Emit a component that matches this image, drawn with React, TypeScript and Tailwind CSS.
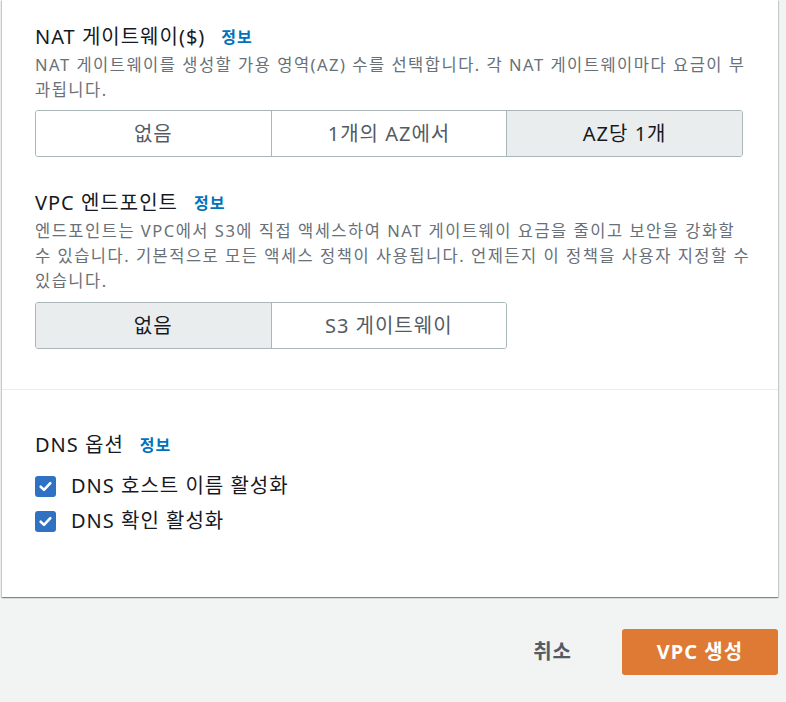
import React, { useState } from 'react';

const FONT = '"Noto Sans", "Noto Sans CJK KR", sans-serif';

function InfoLink() {
    return <a className="ml-[16px] text-[16px] font-bold tracking-[1px] text-[#0073bb] leading-[24px]">정보</a>;
}

interface SegmentedProps {
    options: string[];
    value: number;
    onChange: (i: number) => void;
    width: string;
}

function Segmented({ options, value, onChange, width }: SegmentedProps) {
    return (
        <div className={`flex h-[47px] rounded-[3px] border border-[#aab7b8] overflow-hidden ${width}`}>
            {options.map((opt, i) => (
                <button
                    key={opt}
                    onClick={() => onChange(i)}
                    className={`flex-1 flex items-center justify-center text-[20px] tracking-[1px] ${i > 0 ? 'border-l border-[#aab7b8]' : ''} ${value === i ? 'bg-[#eaeded] text-[#16191f]' : 'bg-white text-[#545b64]'}`}
                >
                    {opt}
                </button>
            ))}
        </div>
    );
}

function Checkbox({ checked, label, onToggle }: { checked: boolean; label: string; onToggle: () => void }) {
    return (
        <label className="flex items-center h-[24px] cursor-pointer" onClick={onToggle}>
            <span className={`w-[21px] h-[21px] rounded-[3px] flex items-center justify-center ${checked ? 'bg-[#2f71c2]' : 'border-2 border-[#aab7b8] bg-white'}`}>
                {checked && (
                    <svg width="15" height="15" viewBox="0 0 14 14" fill="none">
                        <path d="M2.5 7.2 L5.6 10.2 L11.5 3.8" stroke="white" strokeWidth="2.4" strokeLinecap="round" strokeLinejoin="round" />
                    </svg>
                )}
            </span>
            <span className="ml-[15px] text-[20px] tracking-[1px] text-[#16191f]">{label}</span>
        </label>
    );
}

export default function App() {
    const [nat, setNat] = useState(2);
    const [endpoint, setEndpoint] = useState(0);
    const [hostnames, setHostnames] = useState(true);
    const [resolution, setResolution] = useState(true);

    return (
        <div className="min-h-[702px] bg-[#f2f3f3] pl-[2px] pr-[8px]" style={{ fontFamily: FONT }}>
            {/* Card */}
            <div className="bg-white shadow-[0_1px_1px_0_rgba(0,28,36,0.3),1px_1px_1px_0_rgba(0,28,36,0.15),-1px_1px_1px_0_rgba(0,28,36,0.15)]">
                <div className="px-[33px] pt-[25px] pb-[40px]">
                    {/* NAT gateways */}
                    <div className="flex items-center">
                        <h3 className="text-[20px] tracking-[1px] text-[#16191f] leading-[24px]">NAT 게이트웨이($)</h3>
                        <InfoLink />
                    </div>
                    <p className="mt-[3px] w-[716px] text-[16.5px] tracking-[1.5px] leading-[25px] text-[#687078]">
                        NAT 게이트웨이를 생성할 가용 영역(AZ) 수를 선택합니다. 각 NAT 게이트웨이마다 요금이 부과됩니다.
                    </p>
                    <div className="mt-[8px]">
                        <Segmented options={['없음', '1개의 AZ에서', 'AZ당 1개']} value={nat} onChange={setNat} width="w-[708px]" />
                    </div>

                    {/* VPC endpoints */}
                    <div className="flex items-center mt-[34px]">
                        <h3 className="text-[20px] tracking-[1px] text-[#16191f] leading-[24px]">VPC 엔드포인트</h3>
                        <InfoLink />
                    </div>
                    <p className="mt-[3px] w-[716px] text-[16.5px] tracking-[1.5px] leading-[25px] text-[#687078]">
                        엔드포인트는 VPC에서 S3에 직접 액세스하여 NAT 게이트웨이 요금을 줄이고 보안을 강화할 수 있습니다. 기본적으로 모든 액세스 정책이 사용됩니다. 언제든지 이 정책을 사용자 지정할 수 있습니다.
                    </p>
                    <div className="mt-[9px]">
                        <Segmented options={['없음', 'S3 게이트웨이']} value={endpoint} onChange={setEndpoint} width="w-[472px]" />
                    </div>
                </div>

                {/* DNS options */}
                <div className="border-t border-[#eaeded] px-[33px] pt-[43px] pb-[64px]">
                    <div className="flex items-center">
                        <h3 className="text-[20px] tracking-[1px] text-[#16191f] leading-[24px]">DNS 옵션</h3>
                        <InfoLink />
                    </div>
                    <div className="mt-[17px] flex flex-col gap-[11px]">
                        <Checkbox checked={hostnames} label="DNS 호스트 이름 활성화" onToggle={() => setHostnames(!hostnames)} />
                        <Checkbox checked={resolution} label="DNS 확인 활성화" onToggle={() => setResolution(!resolution)} />
                    </div>
                </div>
            </div>

            {/* Footer actions */}
            <div className="flex justify-end items-center gap-[50px] pt-[32px]">
                <button className="text-[20px] tracking-[1px] font-bold text-[#545b64]">취소</button>
                <button className="w-[156px] h-[46px] rounded-[3px] bg-[#de7a34] text-[20px] tracking-[1px] font-bold text-white">VPC 생성</button>
            </div>
        </div>
    );
}
